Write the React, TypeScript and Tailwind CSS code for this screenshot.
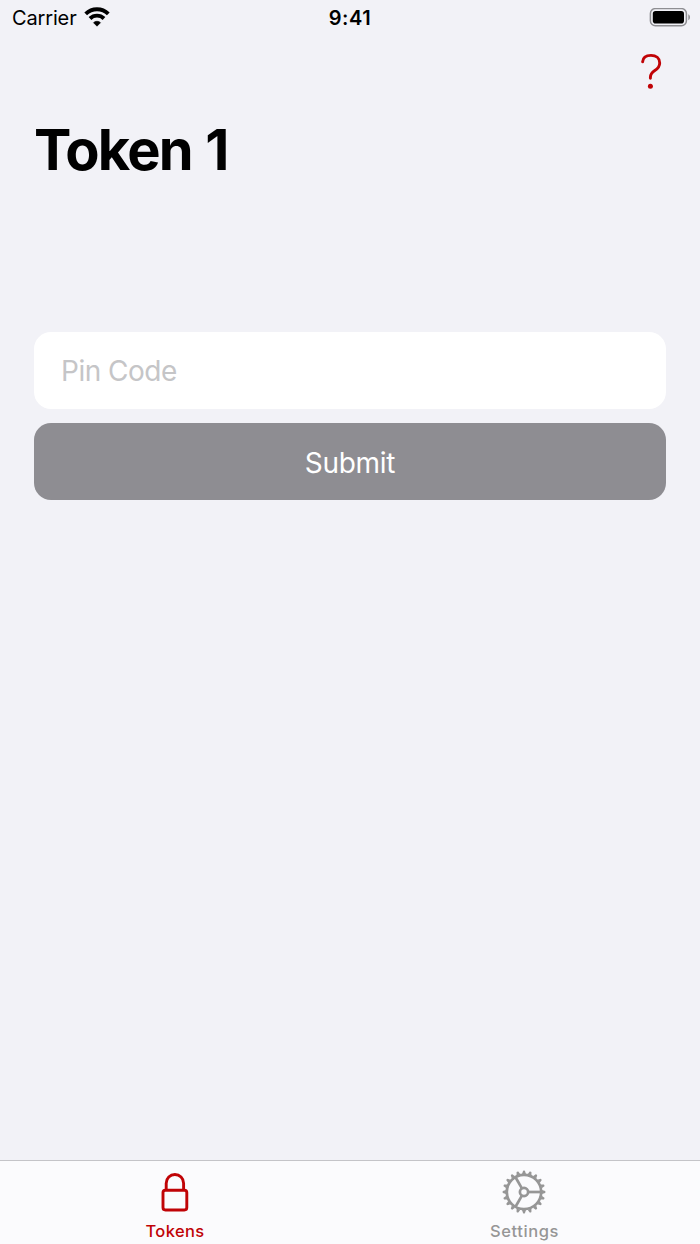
import { useState } from 'react';

type Tab = 'tokens' | 'settings';

function WifiIcon() {
  return (
    <svg width="26" height="20" viewBox="0 0 26 20" fill="none" stroke="#000" strokeWidth="3.9">
      <path d="M1.7 6.8a16.2 16.2 0 0 1 22.6 0" />
      <path d="M6 11.5a10 10 0 0 1 14 0" />
      <path d="M13 19.2l-3.5-3.5a5 5 0 0 1 7 0z" fill="#000" stroke="#000" strokeWidth="0.6" strokeLinejoin="round" />
    </svg>
  );
}

function BatteryIcon() {
  return (
    <svg width="42" height="20" viewBox="0 0 42 20" fill="none">
      <rect x="1.4" y="0.6" width="36" height="17.2" rx="5" stroke="#8e8e92" strokeWidth="1.5" />
      <rect x="3.8" y="2.9" width="31.2" height="12.6" rx="2.8" fill="#000" />
      <path d="M39.3 6.2c2.2.9 2.2 5.1 0 6z" fill="#8e8e92" />
    </svg>
  );
}

function QuestionIcon() {
  return (
    <svg width="22" height="36" viewBox="0 0 22 36" fill="none">
      <path
        d="M2.6 8.9C2.9 4.7 6.2 2.4 11 2.4c5.1 0 8.7 3 8.7 7.5 0 3.4-1.7 5.5-4.9 7.6-3.3 2.2-4.4 3.9-4.4 6.7v1.1"
        stroke="#c00306"
        strokeWidth="2.9"
        strokeLinecap="round"
      />
      <circle cx="10.4" cy="33.2" r="2.5" fill="#c00306" />
    </svg>
  );
}

function LockIcon() {
  return (
    <svg width="28" height="40" viewBox="0 0 28 40" fill="none" stroke="currentColor" strokeWidth="2.9">
      <rect x="2" y="17.2" width="23.8" height="19.8" rx="2.4" />
      <path d="M5.2 17V10.2a8.7 8.7 0 0 1 17.4 0V17" />
    </svg>
  );
}

const TEETH = Array.from({ length: 20 }, (_, i) => i * 18);

function GearIcon() {
  return (
    <svg width="44" height="44" viewBox="-22 -22 44 44" fill="none" stroke="currentColor" strokeWidth="2.7">
      <circle r="17.2" />
      <circle r="4.1" />
      {[0, 120, 240].map((a) => (
        <path key={a} d="M4.5 0H17" transform={`rotate(${a})`} />
      ))}
      {TEETH.map((a) => (
        <path
          key={a}
          d="M18-2l3.2 1.1q.5.9 0 1.8L18 2z"
          fill="currentColor"
          stroke="none"
          transform={`rotate(${a})`}
        />
      ))}
    </svg>
  );
}

export default function App() {
  const [tab, setTab] = useState<Tab>('tokens');
  const [pin, setPin] = useState('');

  return (
    <div className="flex h-[1244px] w-[700px] flex-col bg-[#f2f2f7] font-['Inter',sans-serif] text-black">
      <header className="grid h-9 grid-cols-3 items-center pr-[9px] pl-3">
        <div className="flex items-center gap-[7px]">
          <span className="text-[20px] tracking-[-0.15px]">Carrier</span>
          <span className="pb-0.5">
            <WifiIcon />
          </span>
        </div>
        <span className="pr-[3px] text-center text-[20px] font-semibold tracking-[0.5px]">9:41</span>
        <div className="flex justify-end">
          <BatteryIcon />
        </div>
      </header>

      <div className="flex h-[72px] justify-end pt-[17px] pr-[38px]">
        <button type="button" aria-label="Help" className="h-9">
          <QuestionIcon />
        </button>
      </div>

      <main className="flex-1 px-[34px]">
        <h1 className="h-20 text-[56px] leading-[84px] font-bold tracking-[-1.8px] [word-spacing:2px]">
          Token 1
        </h1>
        <form className="mt-36 flex flex-col gap-[14px]" onSubmit={(e) => e.preventDefault()}>
          <input
            type="text"
            value={pin}
            onChange={(e) => setPin(e.target.value)}
            placeholder="Pin Code"
            className="h-[77px] rounded-[17px] bg-white px-[27px] text-[28px] tracking-[-0.5px] outline-none placeholder:text-[#c5c5c7]"
          />
          <button
            type="submit"
            className="h-[77px] rounded-[17px] bg-[#8e8d92] pt-0.5 text-[28px] tracking-[-0.3px] text-white"
          >
            Submit
          </button>
        </form>
      </main>

      <nav className="grid h-[84px] grid-cols-2 border-t border-[#c4c4c8] bg-[#fbfbfd]">
        <button
          type="button"
          onClick={() => setTab('tokens')}
          className={`flex flex-col items-center ${tab === 'tokens' ? 'text-[#c00306]' : 'text-[#969696]'}`}
        >
          <span className="flex h-[60px] items-center pt-[3px] pr-px">
            <LockIcon />
          </span>
          <span className="text-[16.5px] leading-[21px] font-medium tracking-[0.4px]">Tokens</span>
        </button>
        <button
          type="button"
          onClick={() => setTab('settings')}
          className={`flex flex-col items-center ${tab === 'settings' ? 'text-[#c00306]' : 'text-[#969696]'}`}
        >
          <span className="flex h-[60px] items-center pt-[2px] pr-[2px]">
            <GearIcon />
          </span>
          <span className="pr-px text-[16.5px] leading-[21px] font-medium tracking-[0.6px]">Settings</span>
        </button>
      </nav>
    </div>
  );
}
